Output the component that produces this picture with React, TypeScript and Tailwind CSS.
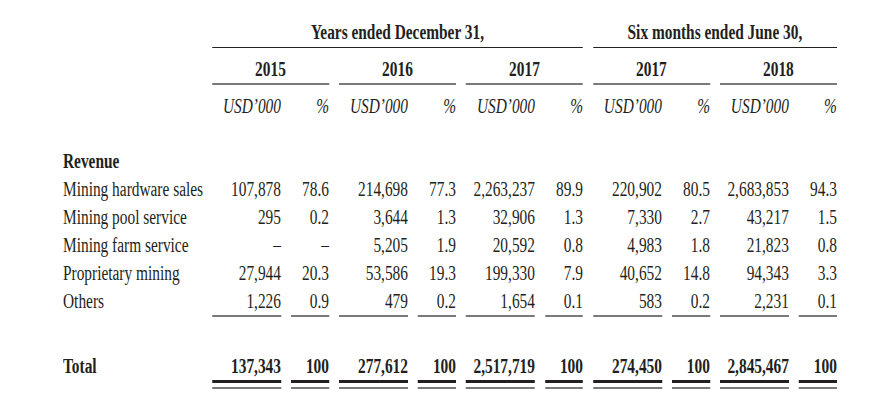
import React from "react";

const grid =
  "grid grid-cols-[185.33px_repeat(5,92px_50.67px)] gap-x-[13.33px]";

const lines = [
  {
    label: "Mining hardware sales",
    values: ["107,878", "78.6", "214,698", "77.3", "2,263,237", "89.9", "220,902", "80.5", "2,683,853", "94.3"],
  },
  {
    label: "Mining pool service",
    values: ["295", "0.2", "3,644", "1.3", "32,906", "1.3", "7,330", "2.7", "43,217", "1.5"],
  },
  {
    label: "Mining farm service",
    values: ["–", "–", "5,205", "1.9", "20,592", "0.8", "4,983", "1.8", "21,823", "0.8"],
  },
  {
    label: "Proprietary mining",
    values: ["27,944", "20.3", "53,586", "19.3", "199,330", "7.9", "40,652", "14.8", "94,343", "3.3"],
  },
  {
    label: "Others",
    values: ["1,226", "0.9", "479", "0.2", "1,654", "0.1", "583", "0.2", "2,231", "0.1"],
  },
];

const totals = ["137,343", "100", "277,612", "100", "2,517,719", "100", "274,450", "100", "2,845,467", "100"];
const years = ["2015", "2016", "2017", "2017", "2018"];

export default function App() {
  return (
    <div className="w-[891px] h-[408px] overflow-hidden bg-white">
      {/* laid out 4/3 wide, squeezed to mimic a condensed Times face */}
      <div className="w-[1188px] origin-top-left scale-x-75 pl-[84px] pt-[18px] font-['Liberation_Serif',serif] text-[20.5px] leading-[28px] text-[#231f20]">
        {/* Period headers */}
        <div className={grid}>
          <div />
          <div className="col-span-6 text-center font-bold pb-px border-b border-[#231f20]">
            Years ended December 31,
          </div>
          <div className="col-span-4 text-center font-bold pb-px border-b border-[#231f20]">
            Six months ended June 30,
          </div>
        </div>

        {/* Years */}
        <div className={`${grid} mt-[7px]`}>
          <div />
          {years.map((y, i) => (
            <div key={i} className="col-span-2 text-center font-bold border-b-2 border-[#7a7a7a]">
              {y}
            </div>
          ))}
        </div>

        {/* Units */}
        <div className={`${grid} mt-[7px] italic`}>
          <div />
          {years.map((_, i) => (
            <React.Fragment key={i}>
              <div className="text-right">USD’000</div>
              <div className="text-right">%</div>
            </React.Fragment>
          ))}
        </div>

        {/* Revenue lines */}
        <div className={`${grid} mt-[27px]`}>
          <div className="font-bold">Revenue</div>
        </div>
        {lines.map((line, r) => (
          <div key={line.label} className={grid}>
            <div className="whitespace-nowrap">{line.label}</div>
            {line.values.map((v, i) => (
              <div
                key={i}
                className={`text-right whitespace-nowrap ${
                  r === lines.length - 1 ? "border-b-2 border-[#7a7a7a]" : ""
                }`}
              >
                {v}
              </div>
            ))}
          </div>
        ))}

        {/* Total */}
        <div className={`${grid} mt-[35px] font-bold`}>
          <div>Total</div>
          {totals.map((v, i) => (
            <div key={i} className="flex flex-col">
              <div className="text-right whitespace-nowrap">{v}</div>
              <div className="h-[3px] bg-[#231f20]" />
              <div className="mt-[4px] h-[2px] bg-[#7a7a7a]" />
            </div>
          ))}
        </div>
      </div>
    </div>
  );
}
